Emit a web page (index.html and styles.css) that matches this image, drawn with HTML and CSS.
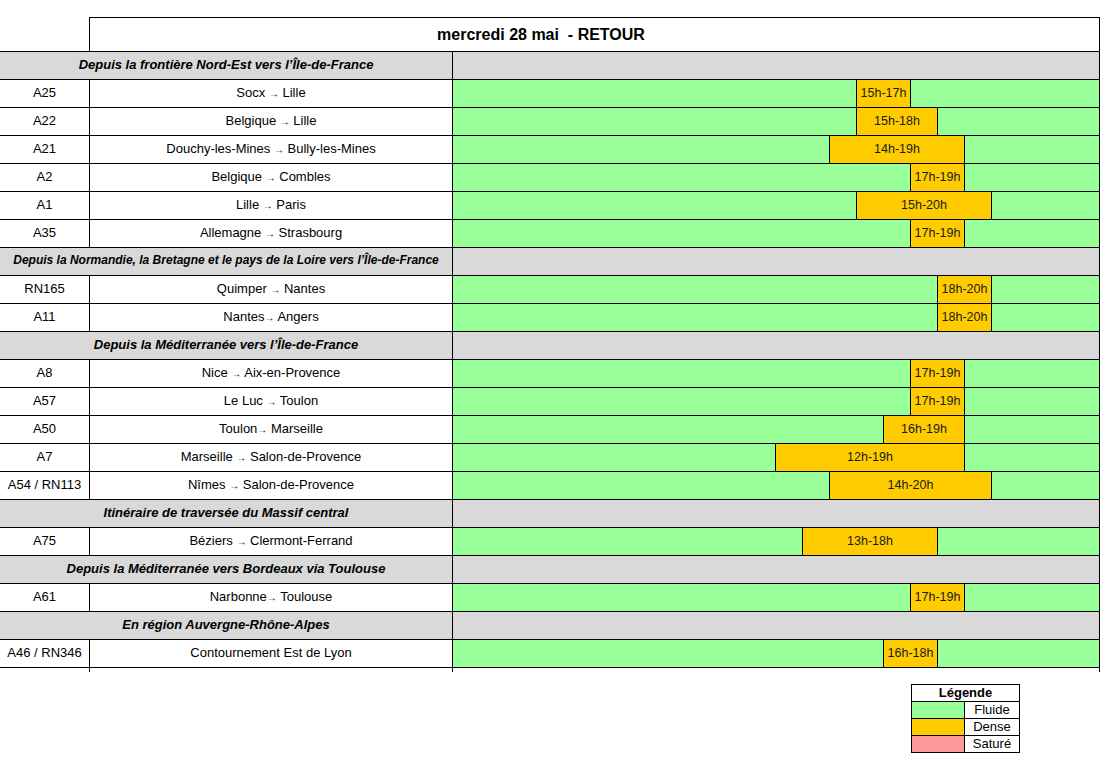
FILE: index.html
```html
<!DOCTYPE html>
<html lang="fr">
<head>
<meta charset="utf-8">
<title>mercredi 28 mai - RETOUR</title>
<link rel="stylesheet" href="styles.css">
</head>
<body>
<div class="sheet">
  <div class="title">mercredi 28 mai&nbsp; - RETOUR</div>
  <div class="table">
    <div class="row section"><div class="c12">Depuis la frontière Nord-Est vers l’Île-de-France</div><div class="c3"></div></div>
    <div class="row"><div class="c1">A25</div><div class="c2">Socx <span class="arr">→</span> Lille</div><div class="c3"><div class="bar" style="left:403px;width:55px">15h-17h</div></div></div>
    <div class="row"><div class="c1">A22</div><div class="c2">Belgique <span class="arr">→</span> Lille</div><div class="c3"><div class="bar" style="left:403px;width:82px">15h-18h</div></div></div>
    <div class="row"><div class="c1">A21</div><div class="c2">Douchy-les-Mines <span class="arr">→</span> Bully-les-Mines</div><div class="c3"><div class="bar" style="left:376px;width:136px">14h-19h</div></div></div>
    <div class="row"><div class="c1">A2</div><div class="c2">Belgique <span class="arr">→</span> Combles</div><div class="c3"><div class="bar" style="left:457px;width:55px">17h-19h</div></div></div>
    <div class="row"><div class="c1">A1</div><div class="c2">Lille <span class="arr">→</span> Paris</div><div class="c3"><div class="bar" style="left:403px;width:136px">15h-20h</div></div></div>
    <div class="row"><div class="c1">A35</div><div class="c2">Allemagne <span class="arr">→</span> Strasbourg</div><div class="c3"><div class="bar" style="left:457px;width:55px">17h-19h</div></div></div>
    <div class="row section"><div class="c12 small">Depuis la Normandie, la Bretagne et le pays de la Loire vers l’Île-de-France</div><div class="c3"></div></div>
    <div class="row"><div class="c1">RN165</div><div class="c2">Quimper <span class="arr">→</span> Nantes</div><div class="c3"><div class="bar" style="left:484px;width:55px">18h-20h</div></div></div>
    <div class="row"><div class="c1">A11</div><div class="c2">Nantes<span class="arr">→</span> Angers</div><div class="c3"><div class="bar" style="left:484px;width:55px">18h-20h</div></div></div>
    <div class="row section"><div class="c12">Depuis la Méditerranée vers l’Île-de-France</div><div class="c3"></div></div>
    <div class="row"><div class="c1">A8</div><div class="c2">Nice <span class="arr">→</span> Aix-en-Provence</div><div class="c3"><div class="bar" style="left:457px;width:55px">17h-19h</div></div></div>
    <div class="row"><div class="c1">A57</div><div class="c2">Le Luc <span class="arr">→</span> Toulon</div><div class="c3"><div class="bar" style="left:457px;width:55px">17h-19h</div></div></div>
    <div class="row"><div class="c1">A50</div><div class="c2">Toulon<span class="arr">→</span> Marseille</div><div class="c3"><div class="bar" style="left:430px;width:82px">16h-19h</div></div></div>
    <div class="row"><div class="c1">A7</div><div class="c2">Marseille <span class="arr">→</span> Salon-de-Provence</div><div class="c3"><div class="bar" style="left:322px;width:190px">12h-19h</div></div></div>
    <div class="row"><div class="c1">A54 / RN113</div><div class="c2">Nîmes <span class="arr">→</span> Salon-de-Provence</div><div class="c3"><div class="bar" style="left:376px;width:163px">14h-20h</div></div></div>
    <div class="row section"><div class="c12">Itinéraire de traversée du Massif central</div><div class="c3"></div></div>
    <div class="row"><div class="c1">A75</div><div class="c2">Béziers <span class="arr">→</span> Clermont-Ferrand</div><div class="c3"><div class="bar" style="left:349px;width:136px">13h-18h</div></div></div>
    <div class="row section"><div class="c12">Depuis la Méditerranée vers Bordeaux via Toulouse</div><div class="c3"></div></div>
    <div class="row"><div class="c1">A61</div><div class="c2">Narbonne<span class="arr">→</span> Toulouse</div><div class="c3"><div class="bar" style="left:457px;width:55px">17h-19h</div></div></div>
    <div class="row section"><div class="c12">En région Auvergne-Rhône-Alpes</div><div class="c3"></div></div>
    <div class="row last"><div class="c1">A46 / RN346</div><div class="c2">Contournement Est de Lyon</div><div class="c3"><div class="bar" style="left:430px;width:55px">16h-18h</div></div></div>
  </div>
  <div class="legend">
    <div class="lg-head">Légende</div>
    <div class="sw fluide"></div><div class="lbl">Fluide</div>
    <div class="sw dense"></div><div class="lbl">Dense</div>
    <div class="sw sature"></div><div class="lbl">Saturé</div>
  </div>
</div>
</body>
</html>
```

FILE: styles.css
```css
html, body {
  margin: 0;
  padding: 0;
  background: #ffffff;
}

body {
  font-family: "Liberation Sans", Arial, sans-serif;
  color: #000;
  font-size: 13px;
}

.sheet {
  padding-top: 17px;
  width: 1100px;
}

.title {
  margin-left: 89px;
  width: 1011px;
  height: 34px;
  box-sizing: border-box;
  border: 1px solid #000;
  border-bottom: none;
  display: flex;
  align-items: center;
  justify-content: center;
  padding-right: 107px;
  font-weight: bold;
  font-size: 16px;
  white-space: pre;
}

.table {
  border-bottom: 1px solid #000;
}

.row {
  display: grid;
  grid-template-columns: 89px 363px 648px;
  height: 28px;
  box-sizing: border-box;
  border-top: 1px solid #000;
}

.c1, .c2, .c12 {
  display: block;
  text-align: center;
  white-space: nowrap;
  line-height: 25px;
}

.c2 {
  border-left: 1px solid #000;
}

.c3 {
  position: relative;
  border-left: 1px solid #000;
  border-right: 1px solid #000;
  background: #99ff99;
}

.row.last .c2::after,
.row.last .c3::before,
.row.last .c3::after {
  content: "";
  position: absolute;
  width: 1px;
  height: 4px;
  background: #000;
}

.row.last .c2 {
  position: relative;
}

.row.last .c2::after {
  left: -1px;
  bottom: -5px;
}

.row.last .c3::before {
  left: -1px;
  bottom: -5px;
}

.row.last .c3::after {
  right: -1px;
  bottom: -5px;
}

.section .c12 {
  grid-column: 1 / 3;
  background: #d9d9d9;
  font-weight: bold;
  font-style: italic;
  font-size: 13px;
}

.section .c12.small {
  font-size: 12px;
}

.section .c3 {
  background: #d9d9d9;
}

.arr {
  font-size: 10px;
}

.bar {
  position: absolute;
  top: 0;
  bottom: 0;
  box-sizing: border-box;
  border-left: 1px solid #000;
  border-right: 1px solid #000;
  background: #ffcc00;
  display: flex;
  align-items: center;
  justify-content: center;
  padding-bottom: 2px;
  font-size: 12.5px;
  color: #1a1a1a;
  white-space: nowrap;
  z-index: 1;
}

.legend {
  margin-top: 16px;
  margin-left: 911px;
  width: 109px;
  box-sizing: border-box;
  display: grid;
  grid-template-columns: 53px 55px;
  border-top: 1px solid #000;
  border-left: 1px solid #000;
  font-size: 13px;
}

.legend > div {
  height: 17px;
  box-sizing: border-box;
  border-bottom: 1px solid #000;
  border-right: 1px solid #000;
  display: flex;
  align-items: center;
  justify-content: center;
  padding-bottom: 1px;
}

.legend .lg-head {
  grid-column: 1 / 3;
  font-weight: bold;
}

.sw.fluide { background: #99ff99; }
.sw.dense { background: #ffcc00; }
.sw.sature { background: #ff9999; }
```
